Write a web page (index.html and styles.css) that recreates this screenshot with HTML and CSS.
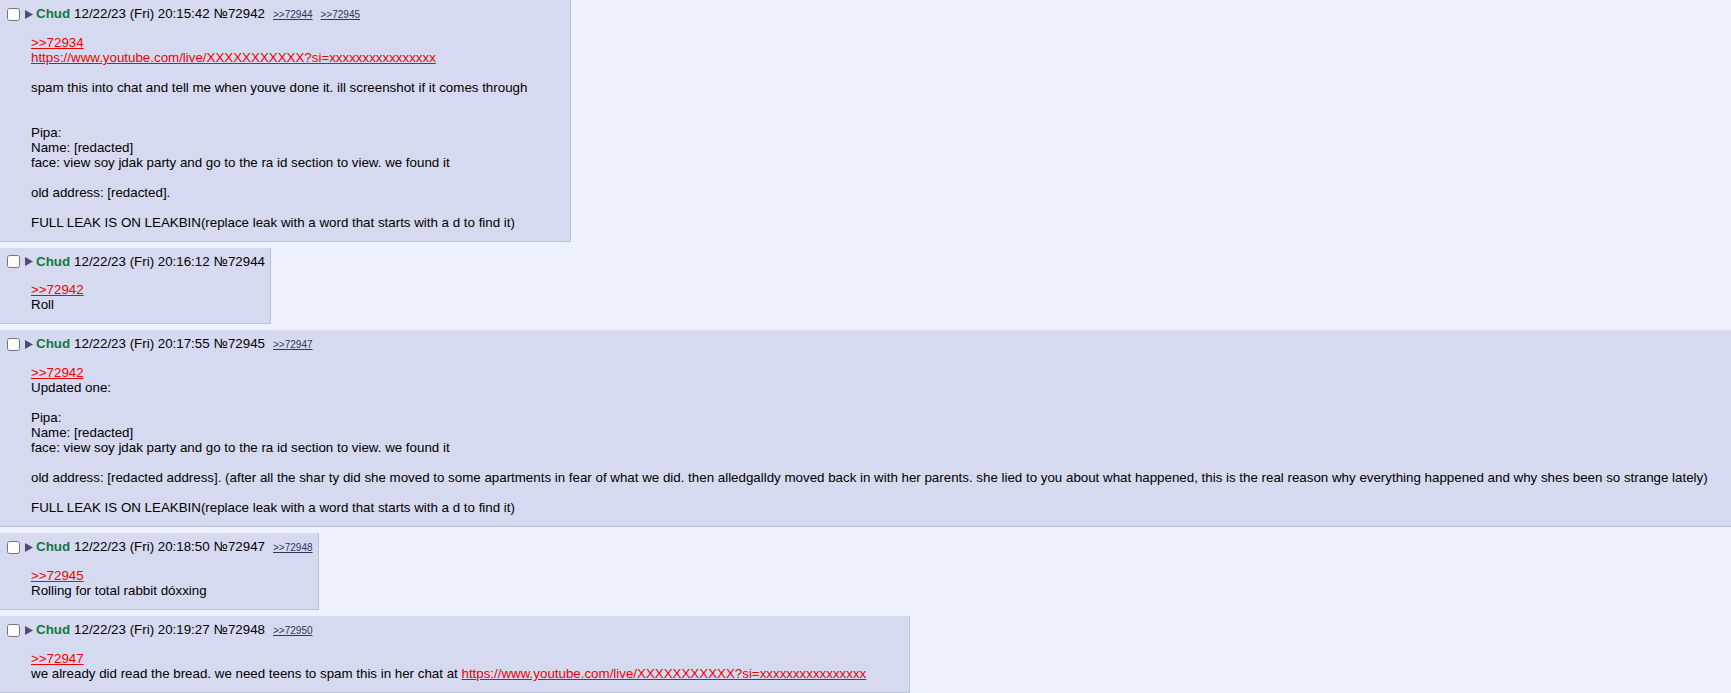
FILE: index.html
```html
<!DOCTYPE html>
<html lang="en">
<head>
    <meta charset="UTF-8">
    <meta name="viewport" content="width=device-width, initial-scale=1.0">
    <title>Thread</title>
    <link rel="stylesheet" href="styles.css">
</head>
<body>
    <div class="thread">

        <div class="post" id="p72942">
            <div class="intro">
                <input type="checkbox" class="delete">
                <svg class="menu" width="8" height="9" viewBox="0 0 8 9"><polygon points="0,0 8,4.5 0,9"/></svg>
                <span class="name">Chud</span>
                <span class="time">12/22/23 (Fri) 20:15:42</span>
                <span class="num">№72942</span>
                <span class="mentioned"><a href="#p72944">&gt;&gt;72944</a><a href="#p72945">&gt;&gt;72945</a></span>
            </div>
            <div class="body">
                <a class="quote" href="#p72934">&gt;&gt;72934</a><br>
                <a class="quote" href="#">https://www.youtube.com/live/XXXXXXXXXXX?si=xxxxxxxxxxxxxxxx</a><br>
                <br>
                spam this into chat and tell me when youve done it. ill screenshot if it comes through<br>
                <br>
                <br>
                Pipa:<br>
                Name: [redacted]<br>
                face: view soy jdak party and go to the ra id section to view. we found it<br>
                <br>
                old address: [redacted].<br>
                <br>
                FULL LEAK IS ON LEAKBIN(replace leak with a word that starts with a d to find it)
            </div>
        </div>

        <div class="post" id="p72944">
            <div class="intro">
                <input type="checkbox" class="delete">
                <svg class="menu" width="8" height="9" viewBox="0 0 8 9"><polygon points="0,0 8,4.5 0,9"/></svg>
                <span class="name">Chud</span>
                <span class="time">12/22/23 (Fri) 20:16:12</span>
                <span class="num">№72944</span>
            </div>
            <div class="body">
                <a class="quote" href="#p72942">&gt;&gt;72942</a><br>
                Roll
            </div>
        </div>

        <div class="post" id="p72945">
            <div class="intro">
                <input type="checkbox" class="delete">
                <svg class="menu" width="8" height="9" viewBox="0 0 8 9"><polygon points="0,0 8,4.5 0,9"/></svg>
                <span class="name">Chud</span>
                <span class="time">12/22/23 (Fri) 20:17:55</span>
                <span class="num">№72945</span>
                <span class="mentioned"><a href="#p72947">&gt;&gt;72947</a></span>
            </div>
            <div class="body">
                <a class="quote" href="#p72942">&gt;&gt;72942</a><br>
                Updated one:<br>
                <br>
                Pipa:<br>
                Name: [redacted]<br>
                face: view soy jdak party and go to the ra id section to view. we found it<br>
                <br>
                old address: [redacted address]. (after all the shar ty did she moved to some apartments in fear of what we did. then alledgalldy moved back in with her parents. she lied to you about what happened, this is the real reason why everything happened and why shes been so strange lately)<br>
                <br>
                FULL LEAK IS ON LEAKBIN(replace leak with a word that starts with a d to find it)
            </div>
        </div>

        <div class="post" id="p72947">
            <div class="intro">
                <input type="checkbox" class="delete">
                <svg class="menu" width="8" height="9" viewBox="0 0 8 9"><polygon points="0,0 8,4.5 0,9"/></svg>
                <span class="name">Chud</span>
                <span class="time">12/22/23 (Fri) 20:18:50</span>
                <span class="num">№72947</span>
                <span class="mentioned"><a href="#p72948">&gt;&gt;72948</a></span>
            </div>
            <div class="body">
                <a class="quote" href="#p72945">&gt;&gt;72945</a><br>
                Rolling for total rabbit dóxxing
            </div>
        </div>

        <div class="post" id="p72948">
            <div class="intro">
                <input type="checkbox" class="delete">
                <svg class="menu" width="8" height="9" viewBox="0 0 8 9"><polygon points="0,0 8,4.5 0,9"/></svg>
                <span class="name">Chud</span>
                <span class="time">12/22/23 (Fri) 20:19:27</span>
                <span class="num">№72948</span>
                <span class="mentioned"><a href="#p72950">&gt;&gt;72950</a></span>
            </div>
            <div class="body">
                <a class="quote" href="#p72947">&gt;&gt;72947</a><br>
                we already did read the bread. we need teens to spam this in her chat at <a class="quote" href="#">https://www.youtube.com/live/XXXXXXXXXXX?si=xxxxxxxxxxxxxxxx</a>
            </div>
        </div>

    </div>
</body>
</html>
```

FILE: styles.css
```css
html {
    overflow: hidden;
}

body {
    font-family: "Liberation Sans", Arial, Helvetica, sans-serif;
    font-size: 10pt;
    color: #000;
    background-color: #eef2ff;
    margin: 0;
    padding: 0;
}

/* wider than the window, the long post runs off the right edge */
.thread {
    width: 1800px;
}

.post {
    display: table;
    background: #d6daf0;
    border-right: 1px solid #b7c5d9;
    border-bottom: 1px solid #b7c5d9;
    padding: 2px 3px;
    margin-bottom: 6px;
}

.intro {
    display: flex;
    align-items: baseline;
    line-height: 15px;
    margin-top: 4px;
    padding-right: 2px;
    white-space: nowrap;

    .delete {
        align-self: center;
        width: 13px;
        height: 13px;
        margin: 0 5px 0 4px;
    }

    .menu {
        align-self: center;
        fill: #4c4c78;
        margin-right: 3px;
    }

    .name {
        color: #117743;
        font-weight: bold;
    }

    .time {
        margin-left: 4px;
    }

    .num {
        margin-left: 4px;
    }

    .mentioned a {
        font-size: 10px;
        color: #34345c;
        margin-left: 8px;
    }
}

.body {
    margin: 13px 40px 9px 28px;
    line-height: 15px;
    white-space: nowrap;
}

.quote {
    color: #e00;
    text-decoration: underline;
}
```
